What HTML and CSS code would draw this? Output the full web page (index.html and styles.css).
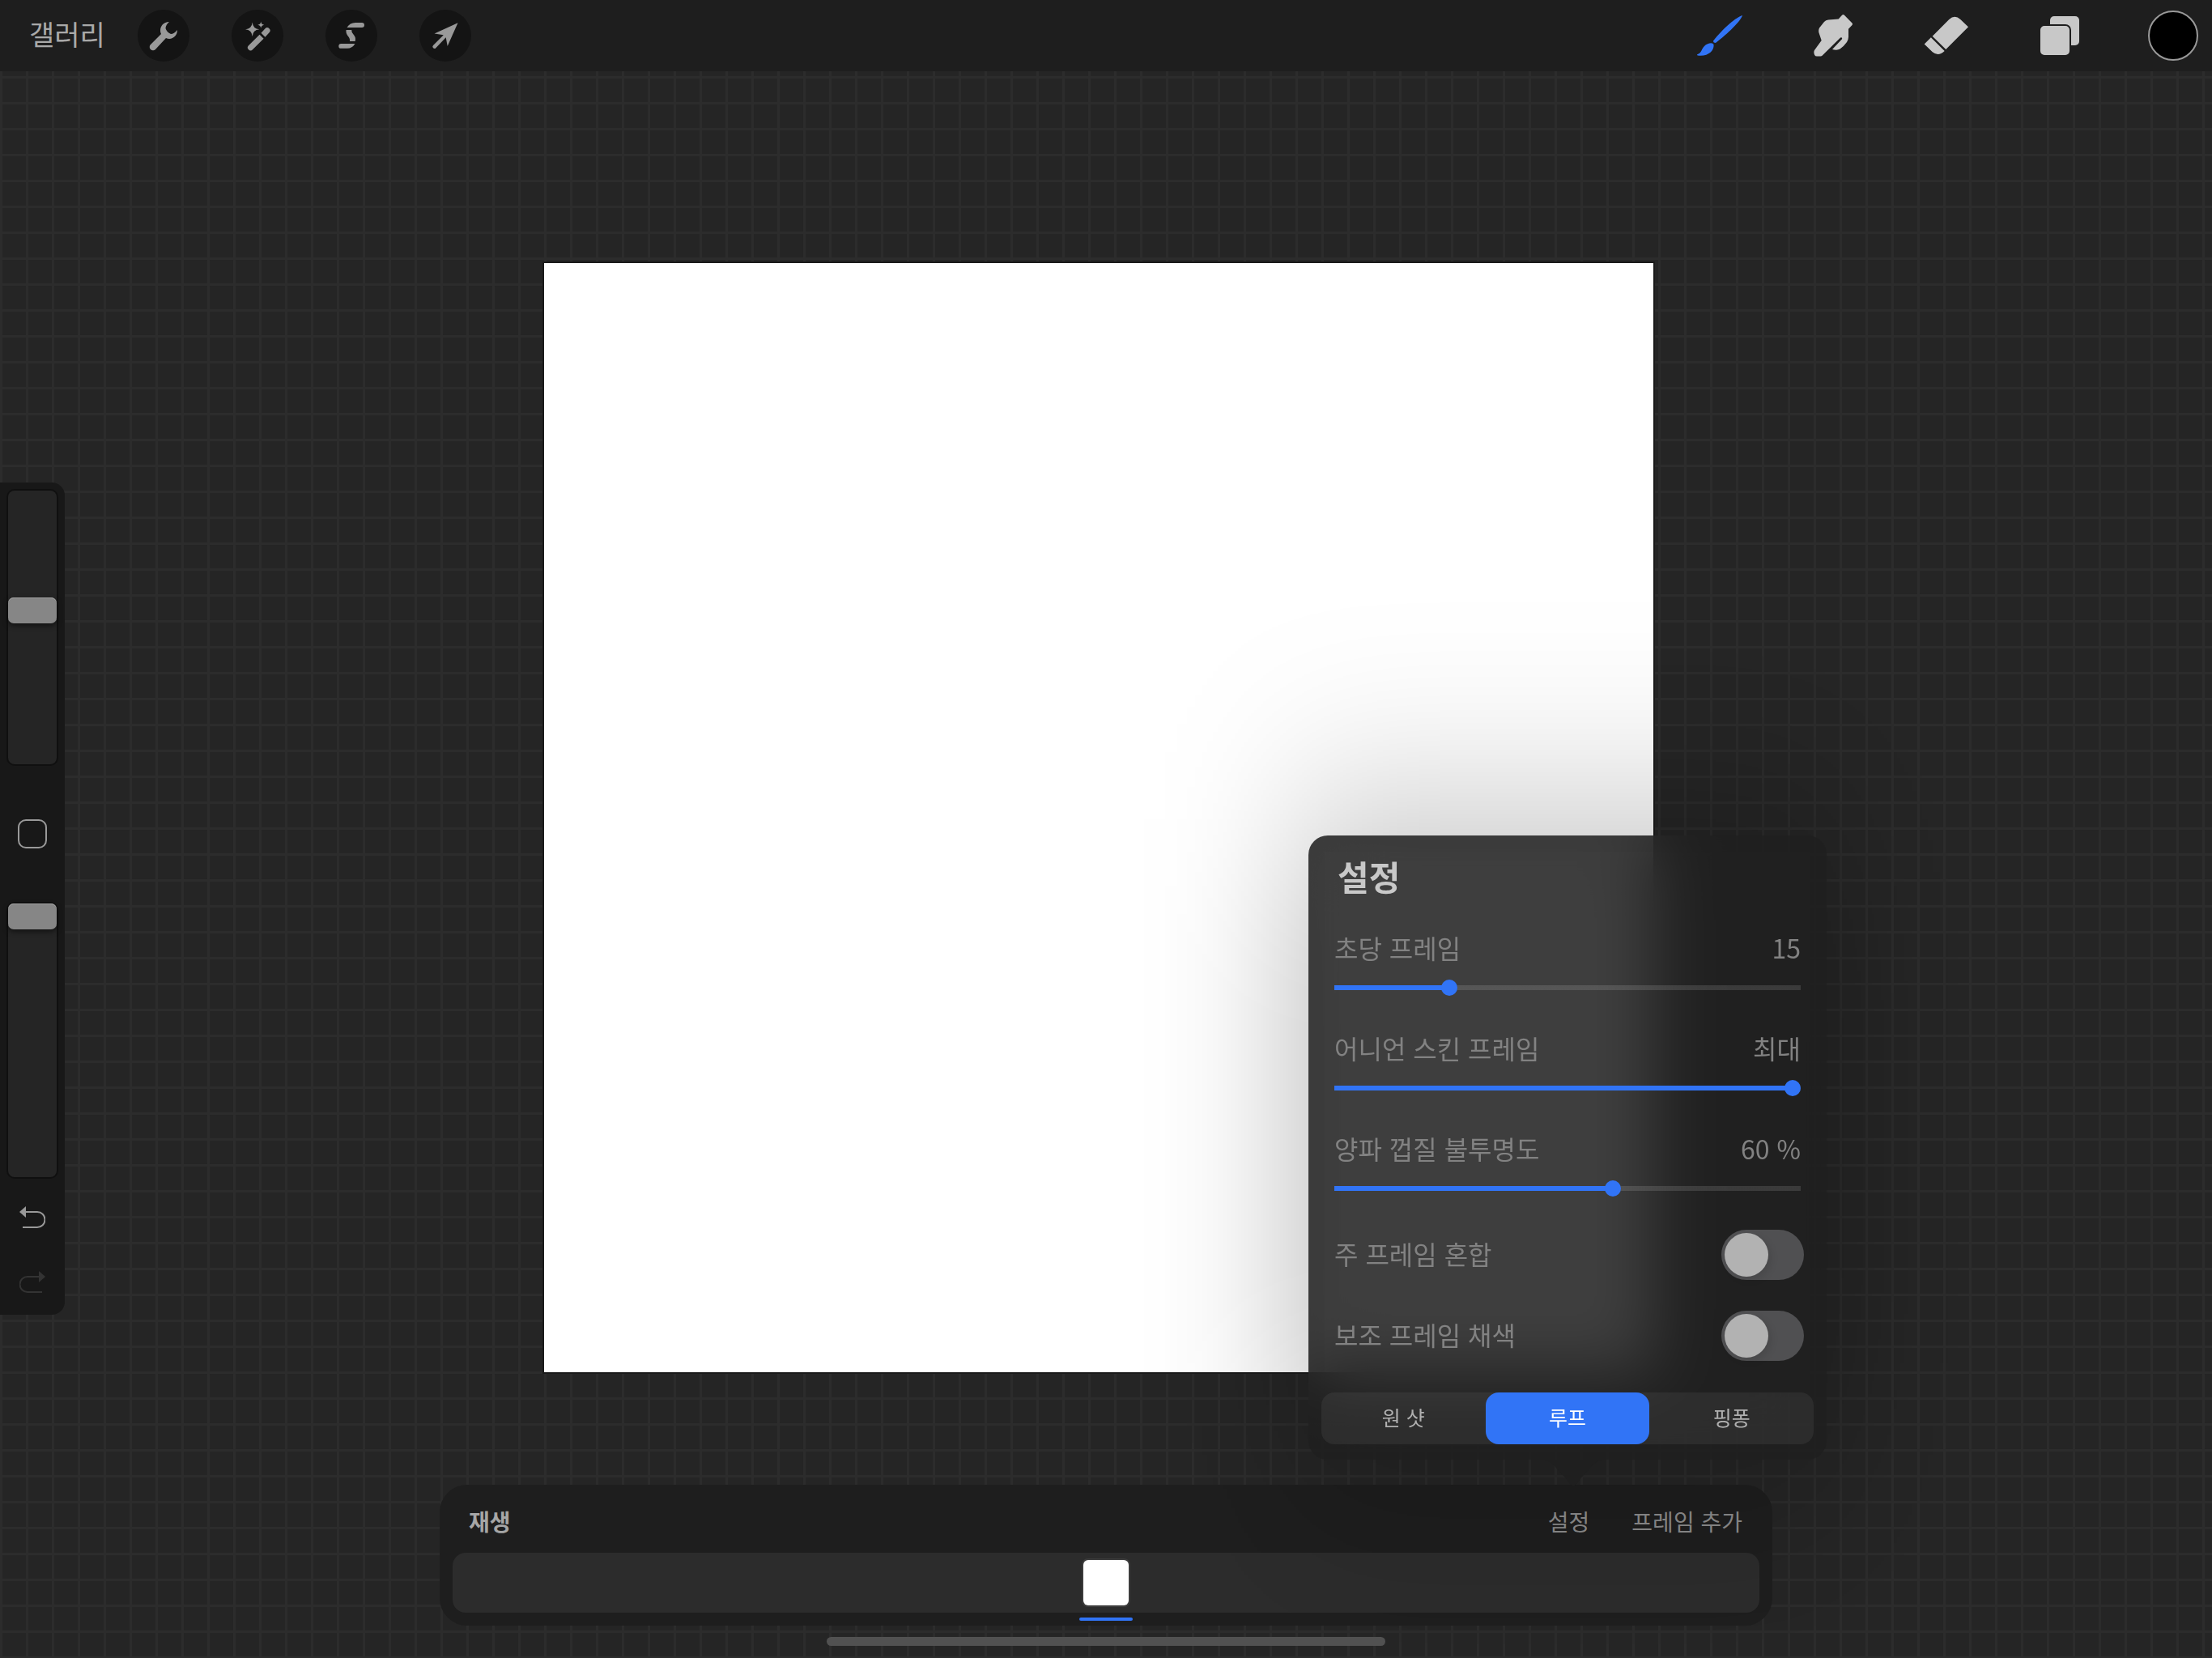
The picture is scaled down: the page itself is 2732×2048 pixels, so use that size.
FILE: index.html
```html
<!DOCTYPE html>
<html lang="ko">
<head>
<meta charset="utf-8">
<meta name="viewport" content="width=device-width, initial-scale=1">
<title>애니메이션 어시스트</title>
<link rel="stylesheet" href="styles.css">
</head>
<body>
<svg class="defs" width="0" height="0" aria-hidden="true">
  <filter id="shade-blur" x="-0.6" y="-0.6" width="2.2" height="2.2"><feGaussianBlur stdDeviation="85 125"/></filter>
</svg>
<div class="app">
  <header class="toolbar">
    <nav class="toolbar-group toolbar-left">
      <button class="gallery" type="button">갤러리</button>
      <button class="tool tool-round" type="button" aria-label="동작">
        <svg viewBox="0 0 64 64"><path d="M39 15C32 15 28 20 28 26Q28 28 29 30L16 43a4.2 4.2 0 0 0 6 6L35 35C42 38 49 33 49 25Q45 30 41 30Q36 28 34.500 23Q35 18 39 15Z"/></svg>
      </button>
      <button class="tool tool-round" type="button" aria-label="조정">
        <svg viewBox="0 0 64 64"><path d="M25.700 15.500Q26.400 23.600 34.200 24.300Q26.400 25 25.700 33Q25 25 17 24.300Q25 23.600 25.700 15.500ZM36.300 14.500Q36.700 18.300 40.300 18.700Q36.700 19.100 36.300 22.800Q35.900 19.100 32.300 18.700Q35.900 18.300 36.300 14.500Z"/><path d="M34.600 30.700L21 44.300a3.500 3.500 0 0 0 5 5L39.600 35.700ZM36.500 28.800L41.500 33.800L46.500 28.300a3.500 3.500 0 0 0-5-5Z"/></svg>
      </button>
      <button class="tool tool-round" type="button" aria-label="선택">
        <svg viewBox="0 0 64 64"><path d="M26.500 22Q30 16 37 16H45a3 3 0 0 1 0 6ZM25.500 25H32.300C32 30 37 31 37 36L36.700 39H30C31 34 25.500 32 25.500 27ZM19.200 42H36.500Q33 47.800 27 47.800H19.200a2.900 2.900 0 0 1 0-5.800Z"/></svg>
      </button>
      <button class="tool tool-round" type="button" aria-label="변형">
        <svg viewBox="0 0 64 64"><path d="M47.500 16.300L34.700 45L32.700 34.200L20.300 47.200a2.200 2.200 0 0 1-3.300-3.200L29.800 31.200L18.500 29.500Z"/></svg>
      </button>
    </nav>
    <nav class="toolbar-group toolbar-right">
      <button class="tool tool-active" type="button" aria-label="그리기">
        <svg viewBox="0 0 64 64"><path d="M60 7C53 9 37 22 24 38.500Q24 41 27 41C42 29.500 58 14 60 7ZM4 55.300C10 53.500 9 49 13 45C17 41 24 40 24.600 43.500C25 51 17 58.500 4.500 56.500Z"/></svg>
      </button>
      <button class="tool" type="button" aria-label="문지르기">
        <svg viewBox="0 0 64 64"><path d="M38.700 11.500L43.300 6.600Q44.500 5.600 45.700 6.600L55.500 16.600Q56.500 17.800 55.500 18.900L51 23.700V33.700Q50.800 37.500 49 40Q45 45.500 40.500 48.600Q37 50.600 31 49L42.800 36.600Q43.500 35.500 42.800 34.600Q41.800 33.900 40.800 34.700L18.500 56.800Q17.800 57.600 16.500 57.600H12Q10 57.600 9.200 56Q7.600 52.500 9 50L17.700 38L14.500 28.500Q13.700 25 15 22.500L21 15Q23 12.700 26 12.600Z"/></svg>
      </button>
      <button class="tool" type="button" aria-label="지우기">
        <svg viewBox="0 0 64 64"><path d="M59 21.300L31.300 49L14.700 32.700L35.300 12Q42.300 5.600 49.300 12ZM12.900 34.300L29.700 51Q22 58.300 14.800 52.300L4.700 42.500Z"/></svg>
      </button>
      <button class="tool" type="button" aria-label="레이어">
        <svg viewBox="0 0 64 64"><rect x="20" y="8" width="36" height="36" rx="5"/><rect class="layer-front" x="7" y="19" width="38" height="38" rx="6"/></svg>
      </button>
      <button class="tool" type="button" aria-label="색상"><span class="swatch"></span></button>
    </nav>
  </header>

  <main class="stage">
    <div class="artboard"></div>
  </main>

  <aside class="sidebar">
    <input class="side-slider" type="range" min="0" max="306" value="174" aria-label="브러시 크기">
    <button class="modify" type="button" aria-label="수정"></button>
    <input class="side-slider" type="range" min="0" max="100" value="100" aria-label="브러시 불투명도">
    <button class="history" type="button" aria-label="실행 취소">
      <svg viewBox="0 0 32 28"><path class="head" d="M0 7L8 0V14Z"/><path class="line" d="M7 7H22a9.500 9.500 0 0 1 0 19H4"/></svg>
    </button>
    <button class="history history-off" type="button" aria-label="다시 실행">
      <svg viewBox="0 0 32 28"><path class="head" d="M32 7L24 0V14Z"/><path class="line" d="M25 7H10a9.500 9.500 0 0 0 0 19H28"/></svg>
    </button>
  </aside>

  <footer class="dock">
    <section class="timeline">
      <div class="timeline-bar">
        <button class="link link-strong" type="button">재생</button>
        <button class="link link-end" type="button">설정</button>
        <button class="link" type="button">프레임 추가</button>
      </div>
      <div class="frames">
        <button class="frame" type="button" aria-label="프레임 1"></button>
      </div>

      <div class="popover-anchor">
        <div class="popover-shade"></div>
        <form class="popover">
          <h2 class="popover-title">설정</h2>
          <div class="fields">
            <div class="field">
              <label for="fps">초당 프레임</label><output for="fps">15</output>
              <input class="slider" id="fps" type="range" min="1" max="60" value="15" style="--fill: 24%">
            </div>
            <div class="field">
              <label for="onion">어니언 스킨 프레임</label><output for="onion">최대</output>
              <input class="slider" id="onion" type="range" min="0" max="12" value="12" style="--fill: 99%">
            </div>
            <div class="field">
              <label for="opacity">양파 껍질 불투명도</label><output for="opacity">60 %</output>
              <input class="slider" id="opacity" type="range" min="0" max="100" value="60" style="--fill: 60%">
            </div>
          </div>
          <div class="switches">
            <div class="switch-row"><label for="blend">주 프레임 혼합</label><input class="switch" id="blend" type="checkbox"></div>
            <div class="switch-row"><label for="tint">보조 프레임 채색</label><input class="switch" id="tint" type="checkbox"></div>
          </div>
          <div class="segments" role="radiogroup" aria-label="재생 방식">
            <label class="segment"><input type="radio" name="mode"><span>원 샷</span></label>
            <label class="segment"><input type="radio" name="mode" checked><span>루프</span></label>
            <label class="segment"><input type="radio" name="mode"><span>핑퐁</span></label>
          </div>
          <svg class="arrow" viewBox="0 0 80 32"><path d="M0 0C14 0 18 10 28 20C34 26 36 32 40 32C44 32 46 26 52 20C62 10 66 0 80 0Z"/></svg>
        </form>
      </div>
    </section>
    <div class="home-bar"></div>
  </footer>
</div>
</body>
</html>
```
FILE: styles.css
```css
:root {
  --chrome: #1e1e1e;
  --ground: #252525;
  --grid: #2c2c2c;
  --accent: #3174f6;
  --muted: #828282;
}

* { box-sizing: border-box; }

body {
  margin: 0;
  background: var(--ground);
  font-family: "Noto Sans CJK KR", "Noto Sans", sans-serif;
  color: var(--muted);
}

button {
  margin: 0;
  padding: 0;
  border: 0;
  background: none;
  font: inherit;
  color: inherit;
}

input { margin: 0; }
svg { display: block; }
.defs { position: absolute; }

.app {
  position: relative;
  display: flex;
  flex-direction: column;
  min-height: 100vh;
  overflow: hidden;
}

/* Top toolbar */
.toolbar {
  display: flex;
  align-items: center;
  justify-content: space-between;
  height: 88px;
  padding: 0 16px 0 36px;
  background: var(--chrome);
}

.toolbar-group { display: flex; align-items: center; }
.toolbar-left { gap: 52px; }
.toolbar-right { gap: 76px; }

.gallery {
  width: 94px;
  margin-right: -12px;
  padding-bottom: 4px;
  font-size: 34px;
  line-height: 48px;
  text-align: left;
  white-space: nowrap;
  color: #a9a9a9;
}

.tool {
  display: grid;
  place-items: center;
  width: 64px;
  height: 64px;
  border-radius: 50%;
  fill: #c8c8c8;
}

.tool svg { width: 64px; height: 64px; }
.tool-round { background: #141414; fill: #999; }
.tool-active { fill: var(--accent); }
.layer-front { stroke: var(--chrome); stroke-width: 2px; }

.swatch {
  width: 62px;
  height: 62px;
  border: 2px solid #999;
  border-radius: 50%;
  background: #000;
}

/* Drawing area */
.stage {
  display: flex;
  flex: 1;
  align-items: center;
  justify-content: center;
  padding: 0 18px 116px 0;
  background-image:
    linear-gradient(to right, var(--grid) 3px, transparent 3px),
    linear-gradient(to bottom, var(--grid) 3px, transparent 3px);
  background-size: 32px 32px;
  background-position: 0 6px;
}

.artboard {
  width: calc(50% + 13px);
  aspect-ratio: 1;
  background: #fff;
  box-shadow: 0 0 0 2px #1a1a1a;
}

/* Brush sidebar */
.sidebar {
  position: absolute;
  top: 596px;
  left: 0;
  display: flex;
  flex-direction: column;
  align-items: center;
  width: 80px;
  padding: 10px 0 26px;
  border-radius: 0 16px 16px 0;
  background: #181818;
}

.side-slider {
  appearance: none;
  writing-mode: vertical-lr;
  direction: rtl;
  width: 60px;
  height: 338px;
  border-radius: 8px;
  background: var(--ground);
  box-shadow: 0 0 0 2px #101010;
}

.side-slider::-webkit-slider-thumb {
  appearance: none;
  width: 60px;
  height: 32px;
  border-radius: 7px;
  background: #868686;
  box-shadow: 0 3px 6px rgba(0, 0, 0, .5), inset 0 1px 0 #a0a0a0;
}

.modify {
  width: 36px;
  height: 36px;
  margin: 68px 0;
  border: 2px solid #999;
  border-radius: 10px;
}

.history {
  width: 32px;
  height: 28px;
  margin-top: 36px;
  color: #999;
}

.history + .history { margin-top: 52px; }
.history-off { color: #333; }
.history .head { fill: currentColor; }
.history .line { fill: none; stroke: currentColor; stroke-width: 2px; }

/* Bottom dock */
.dock {
  position: absolute;
  right: 0;
  bottom: 0;
  left: 0;
  display: flex;
  flex-direction: column;
  align-items: center;
  gap: 14px;
  padding-bottom: 15px;
}

.home-bar {
  position: relative;
  width: 690px;
  height: 11px;
  border-radius: 6px;
  background: #515151;
}

.timeline {
  position: relative;
  width: 100%;
  max-width: 1646px;
  padding: 16px;
  border-radius: 34px;
  background: var(--chrome);
}

.timeline-bar {
  display: flex;
  align-items: center;
  gap: 52px;
  height: 68px;
  padding: 0 21px 10px 20px;
}

.link {
  font-size: 28px;
  line-height: 40px;
  color: #8e8e8e;
}

.link-strong { font-weight: 700; color: #a6a6a6; }
.link-end { margin-left: auto; }

.frames {
  display: flex;
  align-items: center;
  justify-content: center;
  height: 74px;
  border-radius: 16px;
  background: #2c2c2c;
}

.frame {
  position: relative;
  width: 56px;
  height: 56px;
  border-radius: 6px;
  background: #fff;
  box-shadow: 0 0 0 2px #3c3c3c;
}

.frame::after {
  content: "";
  position: absolute;
  right: -5px;
  bottom: -19px;
  left: -5px;
  height: 4px;
  border-radius: 2px;
  background: var(--accent);
}

/* Settings popover */
.popover-anchor {
  position: absolute;
  right: -67px;
  bottom: calc(100% + 31px);
  width: 640px;
}

/* Soft shade round the popover, cut out behind the panel itself */
.popover-shade {
  position: absolute;
  inset: -20px;
  background: rgba(0, 0, 0, .25);
  filter: url(#shade-blur);
  pointer-events: none;
  clip-path: polygon(evenodd,
    -400px -480px, calc(100% + 400px) -480px, calc(100% + 400px) calc(100% + 480px), -400px calc(100% + 480px), -400px -480px,
    40px 40px, calc(100% - 40px) 40px, calc(100% - 40px) calc(100% - 40px), 40px calc(100% - 40px), 40px 40px);
}

.popover {
  position: relative;
  padding: 22px 16px 19px;
  border-radius: 24px;
  background: rgba(31, 31, 31, .863);
  backdrop-filter: blur(40px);
}

.popover-title {
  margin: 0 20px 40px;
  font-size: 42px;
  font-weight: 700;
  line-height: 56px;
  color: #c8c8c8;
}

.fields {
  display: grid;
  gap: 44px;
  padding: 0 16px;
}

.field {
  display: grid;
  grid-template-columns: 1fr auto;
  row-gap: 20px;
  font-size: 32px;
  line-height: 40px;
}

.slider {
  appearance: none;
  grid-column: 1 / -1;
  width: 100%;
  height: 20px;
  background: none;
}

.slider::-webkit-slider-runnable-track {
  height: 6px;
  background: linear-gradient(to right, var(--accent) var(--fill), rgba(255, 255, 255, .12) var(--fill));
}

.slider::-webkit-slider-thumb {
  appearance: none;
  width: 20px;
  height: 20px;
  margin-top: -7px;
  border-radius: 50%;
  background: var(--accent);
}

.switches {
  display: grid;
  gap: 38px;
  padding: 0 12px 0 16px;
  margin: 41px 0 39px;
}

.switch-row {
  display: flex;
  align-items: center;
  justify-content: space-between;
  font-size: 32px;
  line-height: 40px;
}

.switch-row label { padding-bottom: 4px; }

.switch {
  appearance: none;
  display: flex;
  align-items: center;
  width: 102px;
  height: 62px;
  padding: 4px;
  border-radius: 31px;
  background: #505052;
}

.switch::before {
  content: "";
  width: 54px;
  height: 54px;
  border-radius: 50%;
  background: #b2b2b2;
  box-shadow: 4px 4px 10px rgba(0, 0, 0, .1);
}

.segments {
  display: grid;
  grid-template-columns: repeat(3, 1fr);
  border-radius: 16px;
  background: rgba(255, 255, 255, .06);
}

.segment {
  position: relative;
  display: grid;
  place-items: center;
  height: 64px;
  padding-bottom: 4px;
  border-radius: 16px;
  font-size: 25px;
  line-height: 32px;
  color: #b0b0b0;
}

.segment input {
  position: absolute;
  inset: 0;
  appearance: none;
}

.segment:has(:checked) { background: var(--accent); color: #fff; }

.arrow {
  position: absolute;
  top: 100%;
  left: 287px;
  width: 80px;
  height: 32px;
  fill: #1f1f1f;
}
```
